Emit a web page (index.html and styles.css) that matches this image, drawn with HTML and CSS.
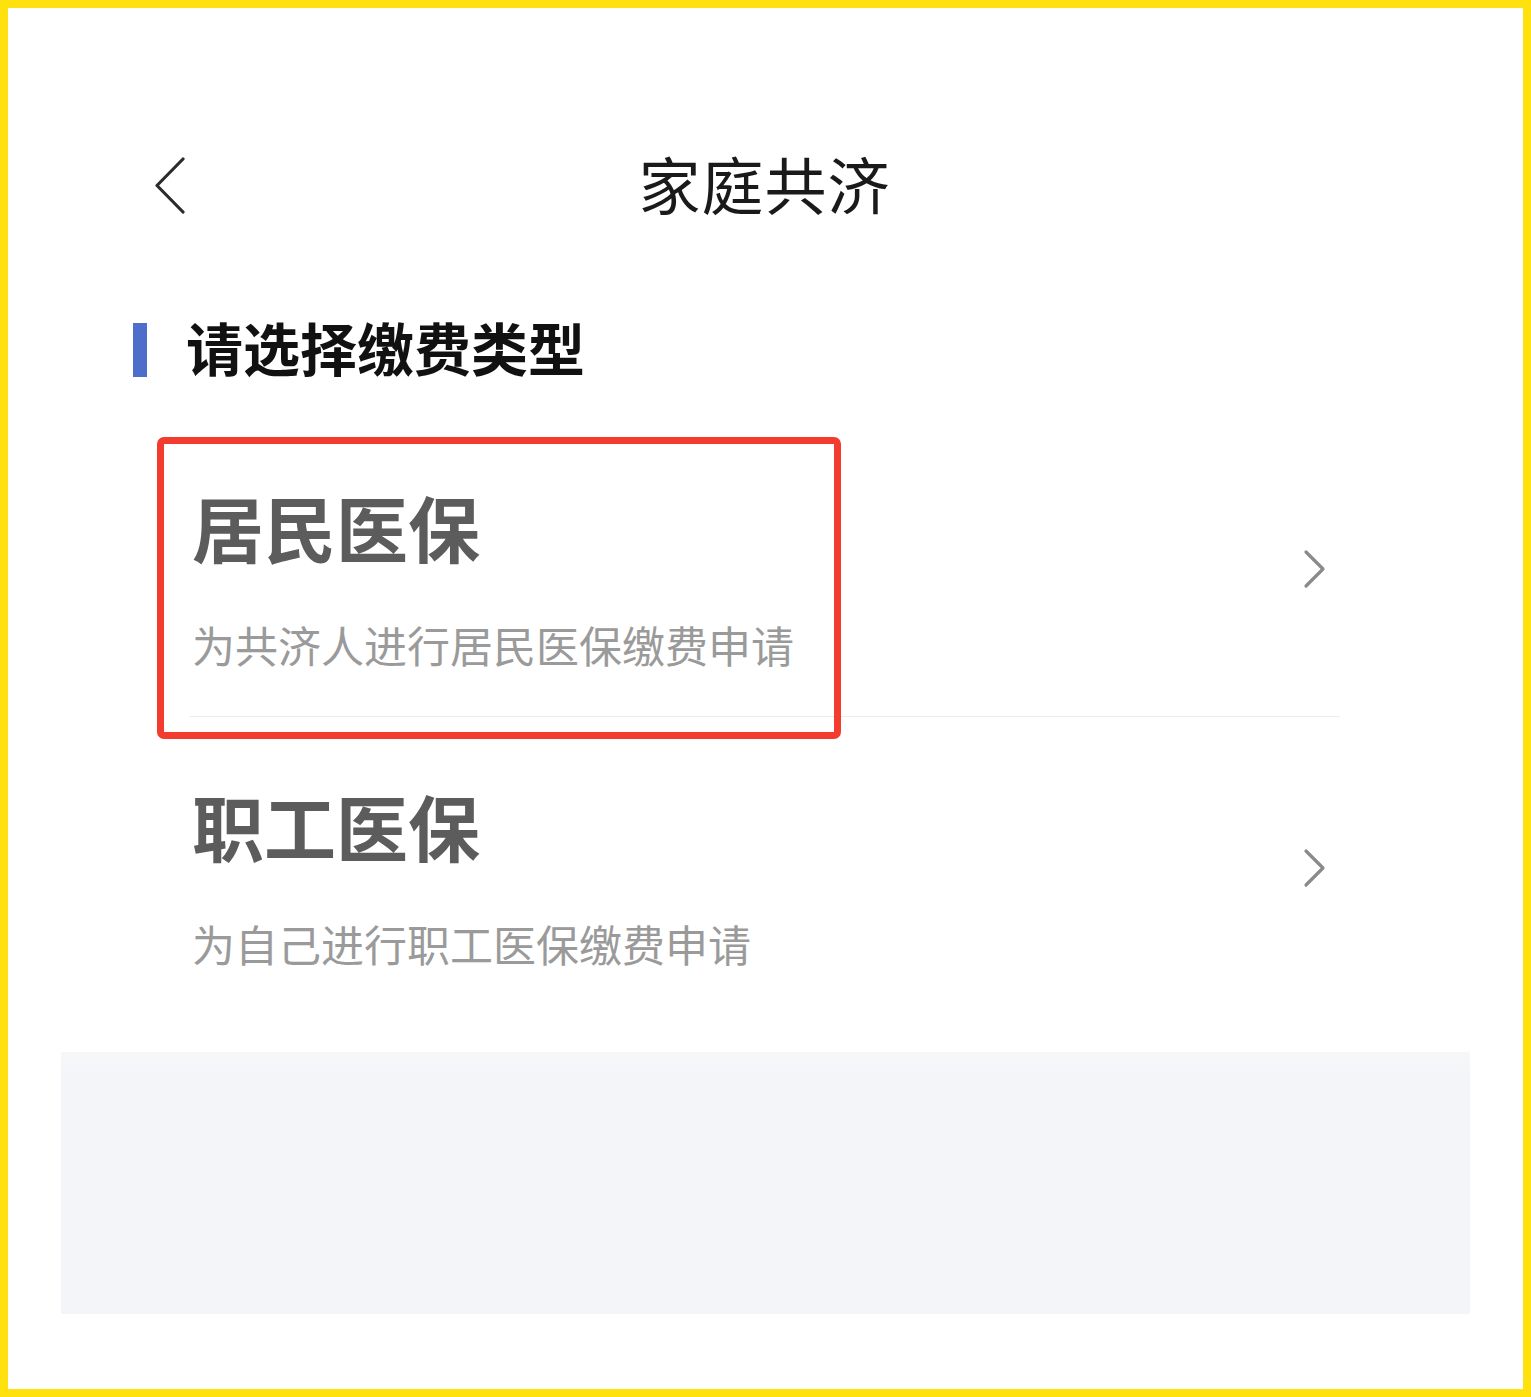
FILE: index.html
```html
<!DOCTYPE html>
<html lang="zh-CN">
<head>
  <meta charset="UTF-8" />
  <meta name="viewport" content="width=device-width, initial-scale=1.0">
  <title>家庭共济</title>
  <link rel="stylesheet" href="styles.css">
</head>
<body>
  <div class="frame">

    <!-- 顶部导航 -->
    <header class="topbar">
      <a class="back" href="#">
        <svg width="32" height="58" viewBox="0 0 32 58">
          <path d="M29 2 L3 28.5 L29 55" fill="none" stroke="#2b2b2b" stroke-width="3.2" stroke-linecap="round" stroke-linejoin="round"/>
        </svg>
      </a>
      <h1>家庭共济</h1>
    </header>

    <!-- 标题 -->
    <div class="section-title">
      <span class="bar"></span>
      <h2>请选择缴费类型</h2>
    </div>

    <!-- 缴费类型列表 -->
    <ul class="type-list">
      <li class="type-item">
        <div class="type-text">
          <div class="type-name">居民医保</div>
          <div class="type-desc">为共济人进行居民医保缴费申请</div>
        </div>
        <svg class="arrow" width="24" height="40" viewBox="0 0 24 40">
          <path d="M3 3 L20 20 L3 37" fill="none" stroke="#8a8a8a" stroke-width="3.2" stroke-linecap="round" stroke-linejoin="round"/>
        </svg>
      </li>
      <li class="type-item">
        <div class="type-text">
          <div class="type-name">职工医保</div>
          <div class="type-desc">为自己进行职工医保缴费申请</div>
        </div>
        <svg class="arrow" width="24" height="40" viewBox="0 0 24 40">
          <path d="M3 3 L20 20 L3 37" fill="none" stroke="#8a8a8a" stroke-width="3.2" stroke-linecap="round" stroke-linejoin="round"/>
        </svg>
      </li>
    </ul>

    <!-- 底部灰色区域 -->
    <div class="panel"></div>

    <!-- 红框标注 -->
    <div class="highlight"></div>
  </div>
</body>
</html>
```

FILE: styles.css
```css
/* 基本样式 */
* {
  box-sizing: border-box;
}
body {
  margin: 0;
  background: #ffe10d;
  font-family: "Noto Sans CJK SC", "Noto Sans", sans-serif;
}

.frame {
  position: relative;
  width: 1531px;
  height: 1397px;
  border: 8px solid #ffe10d;
  background: #fff;
  overflow: hidden;
}

/* 顶部导航 */
.topbar {
  position: relative;
  height: 80px;
  margin-top: 135px;
  display: flex;
  align-items: center;
  justify-content: center;
}
.back {
  position: absolute;
  left: 146px;
  top: 14px;
  display: flex;
}
.topbar h1 {
  margin: 0;
  font-size: 62px;
  line-height: 80px;
  font-weight: 400;
  color: #1a1a1a;
  letter-spacing: 1px;
  transform: translateX(-1px);
}

/* 标题 */
.section-title {
  display: flex;
  align-items: center;
  gap: 39px;
  margin: 99px 0 0 125px;
  height: 56px;
}
.section-title .bar {
  width: 14px;
  height: 54px;
  background: #4d6fc9;
}
.section-title h2 {
  margin: -8px 0 0;
  font-size: 57px;
  line-height: 56px;
  font-weight: 700;
  color: #111;
}

/* 列表 */
.type-list {
  list-style: none;
  margin: 40px 0 0 182px;
  padding: 0;
  width: 1150px;
}
.type-item {
  display: flex;
  align-items: center;
  justify-content: space-between;
  padding: 68px 13px 42px 2px;
  border-bottom: 1px solid #ececec;
}
.type-item:last-child {
  border-bottom: none;
}
.type-name {
  font-size: 72px;
  line-height: 80px;
  font-weight: 700;
  color: #5c5c5c;
}
.type-desc {
  margin-top: 48px;
  font-size: 43px;
  line-height: 60px;
  color: #9a9a9a;
}
.arrow {
  margin-bottom: 22px;
}

/* 底部区域 */
.panel {
  margin: 37px 0 0 53px;
  width: 1409px;
  height: 262px;
  background: linear-gradient(#f7f7f8, #f4f5f9 20px);
}

/* 红框 */
.highlight {
  position: absolute;
  left: 149px;
  top: 429px;
  width: 684px;
  height: 302px;
  border: 7px solid #f33b2f;
  border-radius: 7px;
}
```
